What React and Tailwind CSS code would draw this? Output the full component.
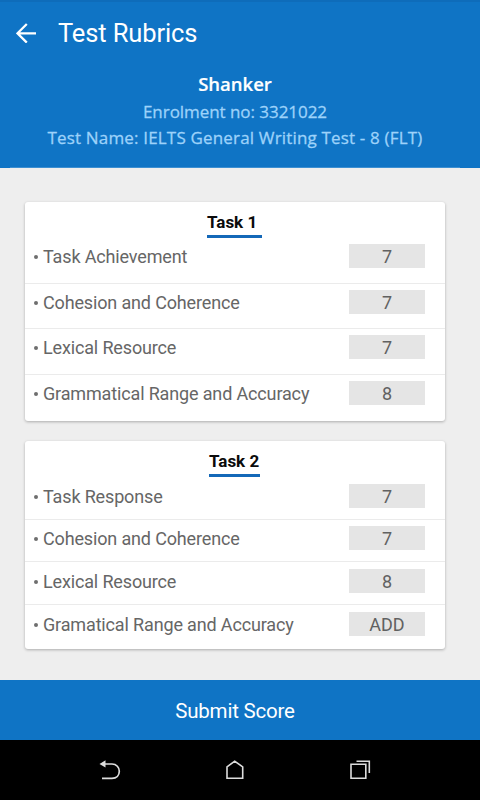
const tasks = [
  {
    title: 'Task 1',
    card: 'mt-[34px] h-[219px]',
    titleBox: 'w-[55px]',
    rows: [
      ['Task Achievement', '7', 'h-[46px] pt-[6px]'],
      ['Cohesion and Coherence', '7', 'h-[45px] pt-[6px]'],
      ['Lexical Resource', '7', 'h-[46px] pt-[6px]'],
      ['Grammatical Range and Accuracy', '8', 'h-[46px] pt-[6px]'],
    ],
  },
  {
    title: 'Task 2',
    card: 'mt-5 h-[208px]',
    titleBox: 'w-[51px]',
    rows: [
      ['Task Response', '7', 'h-[43px] pt-[7px]'],
      ['Cohesion and Coherence', '7', 'h-[42px] pt-[6px]'],
      ['Lexical Resource', '8', 'h-[43px] pt-[7px]'],
      ['Gramatical Range and Accuracy', 'ADD', 'h-[44px] pt-[7px]'],
    ],
  },
];

function TaskCard({ task }) {
  return (
    <section className={`ml-[25px] w-[420px] rounded-[3px] bg-white shadow-[0_1px_3px_rgba(0,0,0,0.28)] ${task.card}`}>
      <div className="flex h-9 justify-center pr-px">
        <h2 className={`h-9 border-b-[3px] border-[#1468b8] pt-[8px] text-[17px] leading-6 font-bold whitespace-nowrap text-[#0b0b0b] ${task.titleBox}`}>
          {task.title}
        </h2>
      </div>
      <ul>
        {task.rows.map(([label, score, size], i) => (
          <li key={label} className={`flex items-start border-[#ebebeb] pr-5 pl-2 ${i < 3 ? 'border-b' : ''} ${size}`}>
            <span className="mt-[11px] mr-[5px] ml-px size-1 rounded-full bg-[#6e6e6e]" />
            <span className="h-6 grow text-[18px] leading-[26px] tracking-[-0.15px] whitespace-nowrap text-[#666]">{label}</span>
            <span className="h-6 w-[76px] bg-[#e5e5e5] text-center text-[18px] leading-[26px] text-[#616161]">{score}</span>
          </li>
        ))}
      </ul>
    </section>
  );
}

export default function App() {
  return (
    <div className="flex h-[800px] w-[480px] flex-col overflow-hidden bg-[#eee] font-['Roboto',sans-serif]">
      <header className="h-[168px] shrink-0 border-t-2 border-[#0e6cba] bg-[#0f74c5] text-white">
        <div className="flex h-[62px] items-center pl-4">
          <svg className="size-5" viewBox="0 0 20 20" fill="none" stroke="currentColor" strokeWidth="2.3">
            <path d="M20 10.3H2M10.8 1L1.5 10.3L10.8 19.6" />
          </svg>
          <h1 className="ml-[22px] text-[25.5px] leading-8 tracking-[-0.13px] whitespace-nowrap">Test Rubrics</h1>
        </div>
        <div className="flex flex-col items-center pr-[10px] font-['Open_Sans',sans-serif] whitespace-nowrap">
          <p className="mt-[6px] text-[18.5px] leading-[28px] font-semibold [-webkit-text-stroke:0.2px_white]">Shanker</p>
          <p className="text-[17px] leading-[27px] tracking-[-0.05px] text-[#9dd2fa] [-webkit-text-stroke:0.3px_#9dd2fa]">Enrolment no: 3321022</p>
          <p className="text-[17px] leading-[26px] tracking-[0.17px] text-[#9dd2fa] [-webkit-text-stroke:0.3px_#9dd2fa]">Test Name: IELTS General Writing Test - 8 (FLT)</p>
        </div>
        <div className="mt-[16px] ml-[10px] h-px w-[450px] bg-[#3c8fd2]" />
      </header>
      <main className="grow">
        {tasks.map((task) => (
          <TaskCard key={task.title} task={task} />
        ))}
      </main>
      <button className="h-[60px] shrink-0 bg-[#0f74c5] pr-[10px] text-[20.5px] leading-[62px] tracking-[-0.2px] text-white">Submit Score</button>
      <nav className="flex h-[60px] shrink-0 items-start bg-black pt-[19px] text-[#ddd]">
        <svg className="ml-[99px] size-[22px]" viewBox="0 0 22 22" fill="none" stroke="currentColor" strokeWidth="1.7">
          <path d="M5 5H13C17.5 5 20.3 8.5 20.3 12.3C20.3 16.5 17.5 19.4 13 19.4H3" />
          <path d="M0.5 5L6.5 1.2V8.5Z" fill="currentColor" stroke="none" />
        </svg>
        <svg className="ml-[104px] size-[22px]" viewBox="0 0 22 22" fill="none" stroke="currentColor" strokeWidth="1.6">
          <path d="M2 19.3V7.8L9.7 2.2L17.7 7.8V19.3Z" />
        </svg>
        <svg className="ml-[102px] size-[22px]" viewBox="0 0 22 22" fill="none" stroke="currentColor" strokeWidth="1.6">
          <path d="M2 5.3H16.8V19.3H2ZM7.5 2.2H20.3V14" />
        </svg>
      </nav>
    </div>
  );
}
